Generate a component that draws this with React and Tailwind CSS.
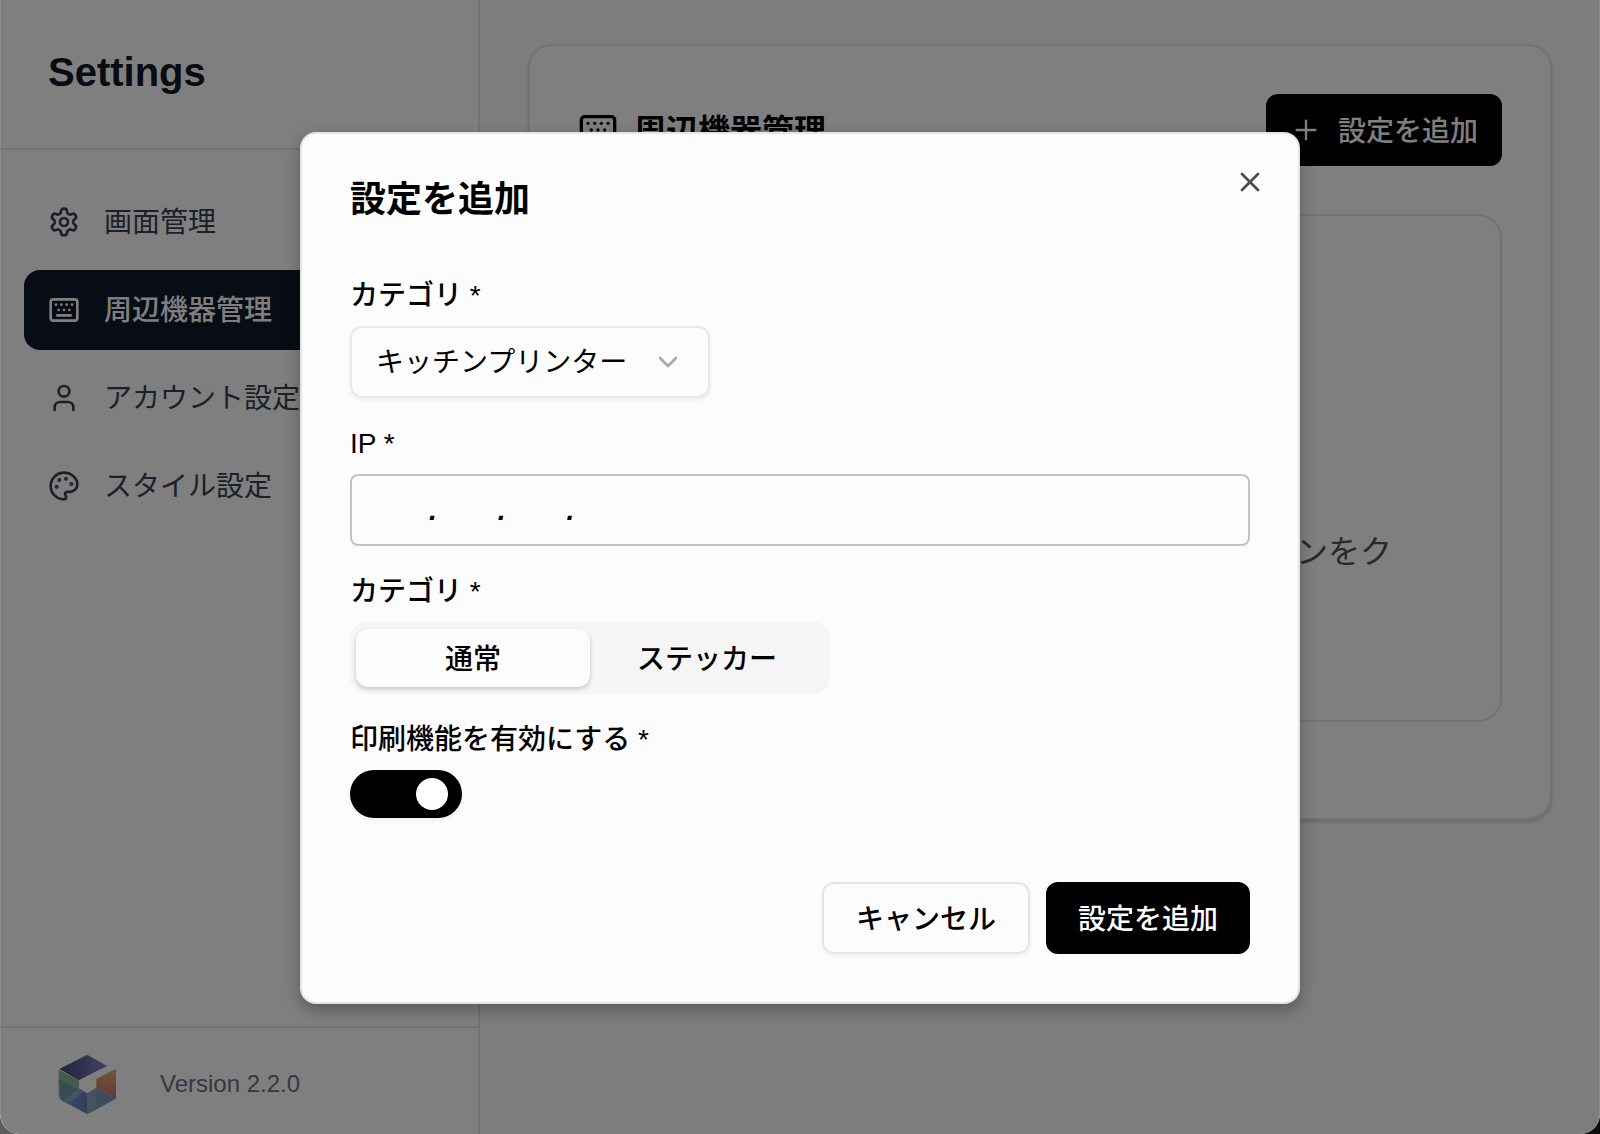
import { useState } from "react";
import { ChevronDown, Keyboard, Plus, Printer, User, X } from "lucide-react";

function GearIcon({ className }) {
  return (
    <svg
      className={className}
      viewBox="0 0 24 24"
      fill="none"
      stroke="currentColor"
      strokeWidth={2}
      strokeLinecap="round"
      strokeLinejoin="round"
      aria-hidden="true"
    >
      <path d="M12.22 2h-.44a2 2 0 0 0-2 2v.18a2 2 0 0 1-1 1.73l-.43.25a2 2 0 0 1-2 0l-.15-.08a2 2 0 0 0-2.73.73l-.22.38a2 2 0 0 0 .73 2.73l.15.1a2 2 0 0 1 1 1.72v.51a2 2 0 0 1-1 1.74l-.15.09a2 2 0 0 0-.73 2.73l.22.38a2 2 0 0 0 2.73.73l.15-.08a2 2 0 0 1 2 0l.43.25a2 2 0 0 1 1 1.73V20a2 2 0 0 0 2 2h.44a2 2 0 0 0 2-2v-.18a2 2 0 0 1 1-1.73l.43-.25a2 2 0 0 1 2 0l.15.08a2 2 0 0 0 2.73-.73l.22-.39a2 2 0 0 0-.73-2.73l-.15-.08a2 2 0 0 1-1-1.74v-.5a2 2 0 0 1 1-1.74l.15-.09a2 2 0 0 0 .73-2.73l-.22-.38a2 2 0 0 0-2.73-.73l-.15.08a2 2 0 0 1-2 0l-.43-.25a2 2 0 0 1-1-1.73V4a2 2 0 0 0-2-2z" />
      <circle cx="12" cy="12" r="3" />
    </svg>
  );
}

function PaletteIcon({ className }) {
  return (
    <svg
      className={className}
      viewBox="0 0 24 24"
      fill="none"
      stroke="currentColor"
      strokeWidth={2}
      strokeLinecap="round"
      strokeLinejoin="round"
      aria-hidden="true"
    >
      <circle cx="13.5" cy="6.5" r=".5" fill="currentColor" />
      <circle cx="17.5" cy="10.5" r=".5" fill="currentColor" />
      <circle cx="8.5" cy="7.5" r=".5" fill="currentColor" />
      <circle cx="6.5" cy="12.5" r=".5" fill="currentColor" />
      <path d="M12 2C6.5 2 2 6.5 2 12s4.5 10 10 10c.926 0 1.648-.746 1.648-1.688 0-.437-.18-.835-.437-1.125-.29-.289-.438-.652-.438-1.125a1.64 1.64 0 0 1 1.668-1.668h1.996c3.051 0 5.555-2.503 5.555-5.554C21.965 6.012 17.461 2 12 2z" />
    </svg>
  );
}

const navItems = [
  { id: "screen", label: "画面管理", icon: GearIcon },
  { id: "devices", label: "周辺機器管理", icon: Keyboard },
  { id: "account", label: "アカウント設定", icon: User },
  { id: "style", label: "スタイル設定", icon: PaletteIcon },
];

const printTypes = [
  { id: "normal", label: "通常" },
  { id: "sticker", label: "ステッカー" },
];

function Logo() {
  return (
    <svg className="size-16" viewBox="0 0 192 192" aria-hidden="true">
      <defs>
        <linearGradient id="top" x1="0" x2="1">
          <stop offset="0" stopColor="#45457f" />
          <stop offset="0.5" stopColor="#6262a0" />
          <stop offset="0.7" stopColor="#7478b2" />
          <stop offset="1" stopColor="#7478b2" />
        </linearGradient>
        <linearGradient id="right" x1="0" x2="0" y1="0" y2="1">
          <stop offset="0" stopColor="#dcb46c" />
          <stop offset="0.5" stopColor="#d4926e" />
          <stop offset="1" stopColor="#c06c88" />
        </linearGradient>
        <linearGradient id="left" x1="0" x2="0" y1="0" y2="1">
          <stop offset="0" stopColor="#8cb8a8" />
          <stop offset="1" stopColor="#82acaa" />
        </linearGradient>
        <linearGradient id="bottom" x1="0" x2="1">
          <stop offset="0" stopColor="#7090c0" />
          <stop offset="1" stopColor="#6484b4" />
        </linearGradient>
      </defs>
      <path fill="url(#left)" d="M8 53 68 86V110L32 154 15 144Q8 139 8 131Z" />
      <path fill="#8cb894" d="M9 54 68 86V114L9 82Z" />
      <path fill="#7099aa" d="M9 82 68 113V110L24 149 15 144Z" />
      <path fill="url(#bottom)" d="M32 153 68 109 94 124V187Z" />
      <path fill="#88a6c0" d="M20 147 68 110 84 118 36 156Z" />
      <path fill="#7e98bc" d="M94 124 121 108 180 140 94 187Z" />
      <path fill="#8ca6bc" d="M94 124 121 108V172L94 187Z" />
      <path fill="url(#right)" d="M121 80 180 50V140L121 108Z" />
      <path fill="url(#top)" d="M10 51 94 8 153 42 68 85Z" />
    </svg>
  );
}

function Sidebar() {
  return (
    <aside className="flex w-[480px] shrink-0 flex-col border-r-2 border-gray-200 bg-white">
      <div className="border-b-2 border-gray-200 px-12 pt-11 pb-12">
        <h1 className="text-[40px] leading-[56px] font-bold text-gray-900">Settings</h1>
      </div>
      <nav className="flex flex-1 flex-col gap-2 px-6 py-8">
        {navItems.map(({ id, label, icon: Icon }) => (
          <a
            key={id}
            href={`#${id}`}
            className={
              id === "devices"
                ? "flex h-20 items-center gap-6 rounded-2xl bg-gray-900 px-6 font-medium text-white"
                : "flex h-20 items-center gap-6 rounded-2xl px-6 text-gray-700"
            }
          >
            <Icon className="size-8 shrink-0" />
            <span className="pt-0.5 text-[28px] leading-10 whitespace-nowrap">{label}</span>
          </a>
        ))}
      </nav>
      <div className="flex items-center gap-10 border-t-2 border-gray-200 px-14 pt-6 pb-[18px]">
        <Logo />
        <span className="text-2xl text-gray-500">Version 2.2.0</span>
      </div>
    </aside>
  );
}

function DevicesCard() {
  return (
    <section className="rounded-3xl border-2 border-neutral-200 bg-white px-12 pt-12 pb-24 shadow-[0_2px_4px_-1px_rgb(0_0_0/0.25)]">
      <div className="flex items-center justify-between">
        <h2 className="flex items-center gap-4 text-[32px] leading-10 font-semibold">
          <Keyboard className="size-10" />
          <span className="pt-0.5">周辺機器管理</span>
        </h2>
        <button
          type="button"
          className="flex h-[72px] items-center gap-4 rounded-xl bg-black px-6 text-[28px] font-medium text-white"
        >
          <Plus className="size-8" strokeWidth={1.75} />
          <span className="pt-1">設定を追加</span>
        </button>
      </div>
      <div className="mt-12 flex flex-col items-center rounded-3xl border-2 border-neutral-200 px-12 pt-29 pb-27 text-center">
        <Printer className="size-24 text-neutral-400" strokeWidth={1.5} />
        <h3 className="mt-8 text-[36px] leading-12 font-medium">設定がありません</h3>
        <p className="mt-6 max-w-[720px] text-[32px] leading-10 text-neutral-600">
          新しい設定を追加するには右上の追加ボタンをクリックしてください。
        </p>
      </div>
    </section>
  );
}

function IpField() {
  return (
    <div className="flex h-[72px] items-center rounded-lg border-2 border-[#c1c1c9] px-4 pt-0.5 text-[28px] font-bold italic">
      <input id="ip" aria-label="IP 1" className="w-[61px] text-center outline-none" />
      <span>.</span>
      <input aria-label="IP 2" className="w-[61px] text-center outline-none" />
      <span>.</span>
      <input aria-label="IP 3" className="w-[61px] text-center outline-none" />
      <span>.</span>
      <input aria-label="IP 4" className="min-w-0 flex-1 outline-none" />
    </div>
  );
}

function AddSettingDialog() {
  const [printType, setPrintType] = useState("normal");
  const [enabled, setEnabled] = useState(true);

  return (
    <div
      role="dialog"
      aria-labelledby="dialog-title"
      className="relative w-full max-w-[1000px] rounded-2xl border-2 border-neutral-200 bg-[#fcfcfc] p-12 shadow-[0_6px_16px_rgb(0_0_0/0.3)]"
    >
      <button type="button" aria-label="閉じる" className="absolute top-8 right-8 text-[#4c4c4c]">
        <X className="size-8" />
      </button>
      <h2 id="dialog-title" className="text-[36px] leading-9 font-semibold">
        設定を追加
      </h2>

      <form className="mt-16 flex flex-col gap-8">
        <div className="flex flex-col items-start gap-4">
          <label htmlFor="category" className="text-[28px] leading-7 font-medium">
            カテゴリ *
          </label>
          <div className="relative">
            <select
              id="category"
              className="h-[72px] w-[360px] appearance-none rounded-xl border-2 border-[#e8e8e8] bg-[#fcfcfc] px-6 pt-0.5 text-[28px] shadow-[0_2px_4px_rgb(0_0_0/0.06)]"
            >
              <option>キッチンプリンター</option>
            </select>
            <ChevronDown className="pointer-events-none absolute top-5 right-[26px] size-8 text-[#a8a8a8]" />
          </div>
        </div>

        <div className="flex flex-col gap-4">
          <label htmlFor="ip" className="text-[28px] leading-7 font-medium">
            IP *
          </label>
          <IpField />
        </div>

        <div className="flex flex-col items-start gap-4">
          <span id="print-type" className="text-[28px] leading-7 font-medium">
            カテゴリ *
          </span>
          <div
            role="group"
            aria-labelledby="print-type"
            className="flex h-[72px] w-[480px] items-center rounded-2xl bg-neutral-100 p-1.5"
          >
            {printTypes.map(({ id, label }) => (
              <button
                key={id}
                type="button"
                onClick={() => setPrintType(id)}
                className={
                  id === printType
                    ? "h-[58px] flex-1 rounded-xl bg-[#fcfcfc] pt-1 text-[28px] font-medium shadow-[0_2px_4px_rgb(0_0_0/0.2)]"
                    : "h-[58px] flex-1 rounded-xl pt-1 text-[28px] font-medium"
                }
              >
                {label}
              </button>
            ))}
          </div>
        </div>

        <div className="flex flex-col items-start gap-4">
          <label htmlFor="enabled" className="text-[28px] leading-7 font-medium">
            印刷機能を有効にする *
          </label>
          <input
            id="enabled"
            type="checkbox"
            role="switch"
            checked={enabled}
            onChange={(e) => setEnabled(e.target.checked)}
            className="flex h-12 w-28 appearance-none items-center rounded-full bg-neutral-300 px-3.5 shadow-[0_2px_4px_rgb(0_0_0/0.06)] before:size-8 before:rounded-full before:bg-white checked:justify-end checked:bg-black"
          />
        </div>

        <div className="mt-8 flex justify-end gap-4">
          <button
            type="button"
            className="h-[72px] rounded-xl border-2 border-neutral-200 px-8 pt-1 text-[28px] font-medium shadow-[0_2px_4px_rgb(0_0_0/0.06)]"
          >
            キャンセル
          </button>
          <button
            type="submit"
            className="h-[72px] rounded-xl bg-black px-8 pt-1 text-[28px] font-medium text-white"
          >
            設定を追加
          </button>
        </div>
      </form>
    </div>
  );
}

export default function App() {
  return (
    <div className="min-h-screen bg-linear-to-r from-[#5c5c5c] to-[#0c0c0c] font-['Liberation_Sans','Noto_Sans_CJK_JP',sans-serif] text-black">
      <div className="relative flex min-h-screen overflow-hidden rounded-b-[20px]">
        <Sidebar />
        <main className="flex-1 bg-[#f8fcfa] px-12 pt-11">
          <DevicesCard />
        </main>
        <div className="absolute inset-0 flex items-center justify-center rounded-b-[20px] border-x border-white/10 bg-black/50 pt-0.5">
          <AddSettingDialog />
        </div>
      </div>
    </div>
  );
}
